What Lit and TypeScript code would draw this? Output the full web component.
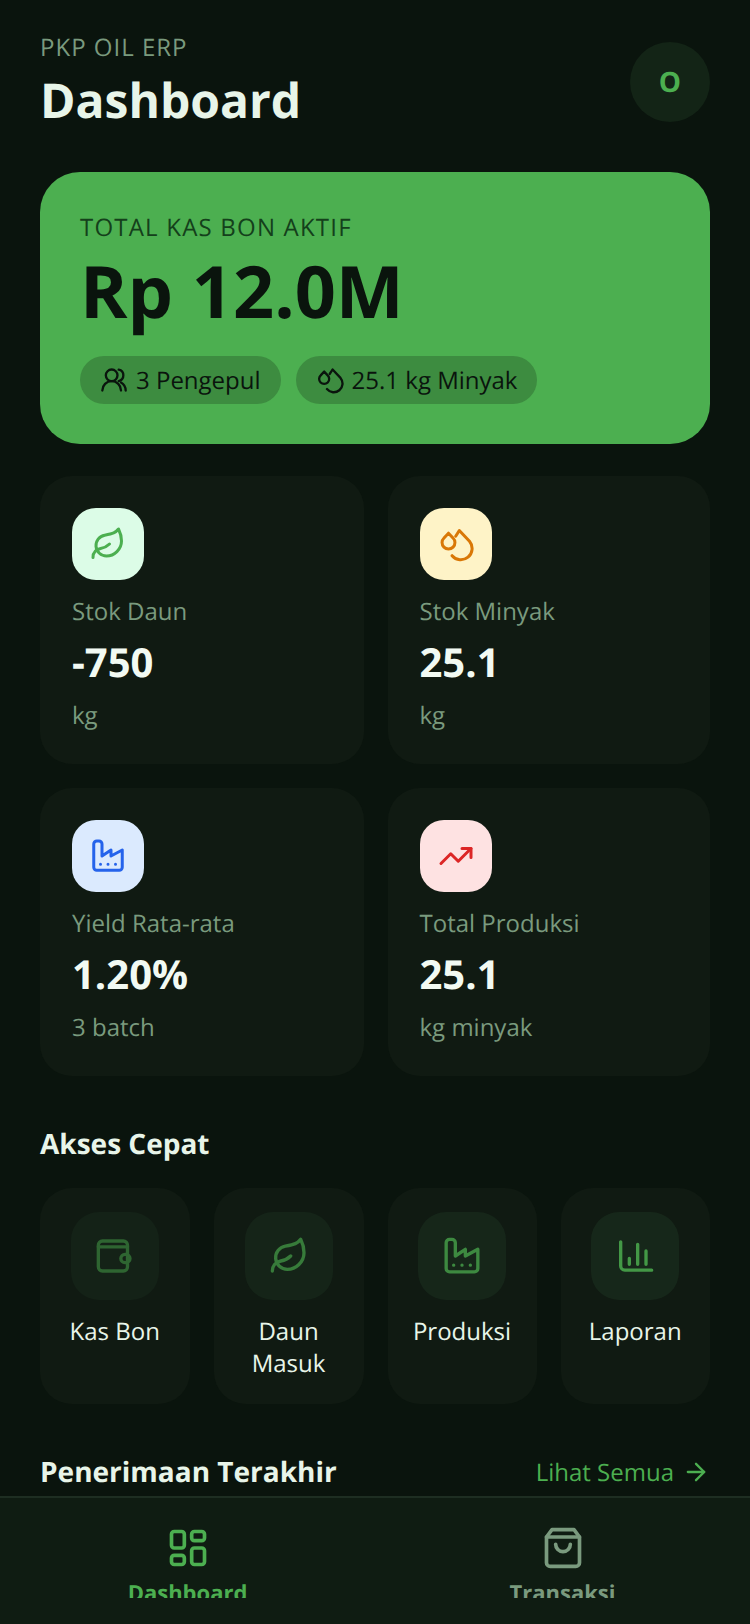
import { LitElement, html, css, svg } from 'lit';
import { customElement } from 'lit/decorators.js';

const icons: Record<string, unknown> = {
  users: svg`<circle cx="10" cy="8" r="5"/><path d="M2 21a8 8 0 0 1 16 0"/><path d="M16 3.1a5 5 0 0 1 0 9.8"/><path d="M22 21a8 8 0 0 0-4-6.9"/>`,
  drops: svg`<path d="M7 4.8 4 8a4.3 4.3 0 1 0 6 0Z"/><path d="M11.8 6.8 14.2 3 21 10.2a7.2 7.2 0 0 1-11.6 9.6"/>`,
  leaf: svg`<path d="M11 20A7 7 0 0 1 9.8 6.1C15.5 5 17 4.48 19 2c1 2 2 4.18 2 8 0 5.5-4.78 10-10 10Z"/><path d="M2 21c0-3 1.85-5.36 5.08-6C9.5 14.52 12 13 13 12"/>`,
  factory: svg`<path d="M2.5 4A2 2 0 0 1 4.5 2H6A2 2 0 0 1 8 4V12L14 8V12L21.5 8V19.5A2 2 0 0 1 19.5 21.5H4.5A2 2 0 0 1 2.5 19.5Z"/><path d="M7 17.5h.01M12 17.5h.01M17 17.5h.01"/>`,
  trend: svg`<path d="M22 7 13.5 15.5 8.5 10.5 2 17"/><path d="M16 7h6v6"/>`,
  wallet: svg`<rect x="2" y="3" width="17.5" height="18" rx="2.5"/><path d="M2 6.5H19.5"/><rect x="15.5" y="11" width="5.5" height="5" rx="2.5"/>`,
  chart: svg`<path d="M3.4 3.5V18a2.5 2.5 0 0 0 2.5 2.5H22"/><path d="M8.6 13.5V17M13.6 5V17M18.6 9V17"/>`,
  grid: svg`<rect x="3" y="3" width="7" height="9" rx="1.5"/><rect x="14" y="3" width="7" height="5" rx="1.5"/><rect x="14" y="12" width="7" height="9" rx="1.5"/><rect x="3" y="16" width="7" height="5" rx="1.5"/>`,
  bag: svg`<path d="M6 2 3 6v14a2 2 0 0 0 2 2h14a2 2 0 0 0 2-2V6l-3-4Z"/><path d="M3 6h18"/><path d="M16 10a4 4 0 0 1-8 0"/>`,
  arrow: svg`<path d="M5 12h14"/><path d="m12 5 7 7-7 7"/>`,
};

function icon(name: string, size: number, weight = 2) {
  return html`<svg width=${size} height=${size} viewBox="0 0 24 24" fill="none" stroke="currentColor"
    stroke-width=${weight} stroke-linecap="round" stroke-linejoin="round">${icons[name]}</svg>`;
}

const stats = [
  { icon: 'leaf', tone: 'green', label: 'Stok Daun', value: '-750', unit: 'kg' },
  { icon: 'drops', tone: 'amber', label: 'Stok Minyak', value: '25.1', unit: 'kg' },
  { icon: 'factory', tone: 'blue', label: 'Yield Rata-rata', value: '1.20%', unit: '3 batch' },
  { icon: 'trend', tone: 'red', label: 'Total Produksi', value: '25.1', unit: 'kg minyak' },
];

const quick = [
  { icon: 'wallet', label: 'Kas Bon', fade: 0.5 },
  { icon: 'leaf', label: 'Daun Masuk', fade: 0.65 },
  { icon: 'factory', label: 'Produksi', fade: 0.75 },
  { icon: 'chart', label: 'Laporan', fade: 0.85 },
];

@customElement('app-root')
export class AppRoot extends LitElement {
  static styles = css`
    :host {
      display: flex;
      flex-direction: column;
      height: 1624px;
      overflow: hidden;
      background: #0a140d;
      color: #e8f5e9;
      font-family: "Open Sans", sans-serif;
      text-rendering: geometricPrecision;
    }

    main {
      flex: 1;
      min-height: 0;
      overflow: hidden;
      padding: 30px 40px 0;
    }

    .header {
      display: flex;
      justify-content: space-between;
      align-items: center;
      margin-bottom: 39px;
    }

    .eyebrow {
      font-size: 24px;
      line-height: 34px;
      letter-spacing: 1px;
      color: #7a9a7e;
      padding-top: 1px;
      margin-bottom: 4px;
    }

    h1 {
      margin: 0;
      font-size: 48px;
      line-height: 64px;
      font-weight: 700;
    }

    .avatar {
      width: 80px;
      height: 80px;
      border-radius: 50%;
      background: #132416;
      color: #4caf50;
      display: flex;
      align-items: center;
      justify-content: center;
      font-size: 28px;
      font-weight: 700;
    }

    .hero {
      background: #4caf50;
      color: #0a140d;
      border-radius: 40px;
      padding: 40px;
      height: 272px;
      box-sizing: border-box;
      margin-bottom: 32px;
    }

    .hero-label {
      font-size: 24px;
      line-height: 30px;
      letter-spacing: 1.2px;
      color: #14401b;
      padding-top: 1px;
    }

    .hero-value {
      font-size: 72px;
      line-height: 96px;
      font-weight: 700;
      margin-bottom: 17px;
    }

    .pills {
      display: flex;
      gap: 15px;
    }

    .pill {
      display: flex;
      align-items: center;
      gap: 8px;
      height: 48px;
      padding: 0 20px;
      border-radius: 24px;
      background: #3d8c40;
      font-size: 24px;
    }

    .stats {
      display: grid;
      grid-template-columns: 323.5px 322.5px;
      gap: 24px;
      margin-bottom: 48px;
    }

    .stat {
      background: #101a12;
      border-radius: 32px;
      padding: 32px;
      height: 288px;
      box-sizing: border-box;
    }

    .stat-icon {
      width: 72px;
      height: 72px;
      border-radius: 24px;
      display: flex;
      align-items: center;
      justify-content: center;
      margin-bottom: 15px;
    }

    .green { background: #dcfce7; color: #4caf50; }
    .amber { background: #fef3c7; color: #d97706; }
    .blue { background: #dbeafe; color: #2563eb; }
    .red { background: #fee2e2; color: #dc2626; }

    .stat-label, .stat-unit {
      font-size: 24px;
      line-height: 34px;
      color: #7a9a7e;
    }

    .stat-value {
      font-size: 40px;
      line-height: 56px;
      font-weight: 700;
      color: #f2faf3;
      margin: 5px 0 9px;
    }

    h2 {
      margin: 0;
      font-size: 28px;
      line-height: 40px;
      font-weight: 700;
    }

    .quick {
      display: grid;
      grid-template-columns: 149.5px 150px 149px 149.5px;
      gap: 24px;
      margin: 24px 0 48px;
    }

    .tile {
      background: #101a12;
      border-radius: 32px;
      padding: 24px 16px;
      height: 216px;
      box-sizing: border-box;
      display: flex;
      flex-direction: column;
      align-items: center;
      gap: 16px;
      text-align: center;
      font-size: 24px;
      line-height: 32px;
    }

    .tile-icon {
      width: 88px;
      height: 88px;
      border-radius: 28px;
      background: #182a1c;
      color: #4caf50;
      display: flex;
      align-items: center;
      justify-content: center;
      flex: none;
    }

    .section-row {
      display: flex;
      justify-content: space-between;
      align-items: center;
    }

    .link {
      display: flex;
      align-items: center;
      gap: 8px;
      color: #4caf50;
      font-size: 24px;
    }

    nav {
      flex: none;
      height: 128px;
      box-sizing: border-box;
      border-top: 2px solid #1e2e22;
      background: #0f1c12;
      display: grid;
      grid-template-columns: 1fr 1fr;
      padding: 28px 0 26px;
    }

    .tab {
      display: flex;
      flex-direction: column;
      align-items: center;
      gap: 8px;
      overflow: hidden;
      color: #7a9a7e;
      font-size: 22px;
      line-height: 30px;
      font-weight: 700;
    }

    .tab.active { color: #4caf50; }
    .tab svg { flex: none; }
  `;

  render() {
    return html`
      <main>
        <div class="header">
          <div>
            <div class="eyebrow">PKP OIL ERP</div>
            <h1>Dashboard</h1>
          </div>
          <div class="avatar">O</div>
        </div>

        <section class="hero">
          <div class="hero-label">TOTAL KAS BON AKTIF</div>
          <div class="hero-value">Rp 12.0M</div>
          <div class="pills">
            <div class="pill">${icon('users', 28)}3 Pengepul</div>
            <div class="pill">${icon('drops', 28)}25.1 kg Minyak</div>
          </div>
        </section>

        <section class="stats">
          ${stats.map(s => html`
            <div class="stat">
              <div class="stat-icon ${s.tone}">${icon(s.icon, 36)}</div>
              <div class="stat-label">${s.label}</div>
              <div class="stat-value">${s.value}</div>
              <div class="stat-unit">${s.unit}</div>
            </div>
          `)}
        </section>

        <h2>Akses Cepat</h2>
        <section class="quick">
          ${quick.map(q => html`
            <div class="tile">
              <div class="tile-icon" style="opacity:${q.fade}">${icon(q.icon, 40)}</div>
              <div>${q.label}</div>
            </div>
          `)}
        </section>

        <div class="section-row">
          <h2>Penerimaan Terakhir</h2>
          <div class="link">Lihat Semua ${icon('arrow', 28)}</div>
        </div>
      </main>

      <nav>
        <div class="tab active">${icon('grid', 44)}<span>Dashboard</span></div>
        <div class="tab">${icon('bag', 44)}<span>Transaksi</span></div>
      </nav>
    `;
  }
}
